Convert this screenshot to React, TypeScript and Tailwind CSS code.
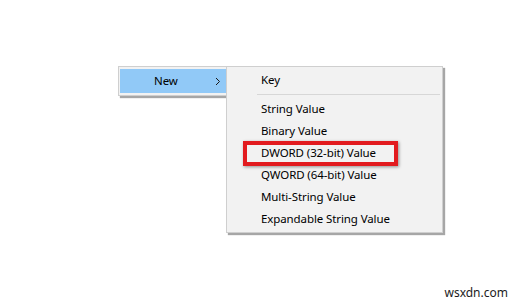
import React from 'react';

const items = [
  'String Value',
  'Binary Value',
  'DWORD (32-bit) Value',
  'QWORD (64-bit) Value',
  'Multi-String Value',
  'Expandable String Value',
];

const App = () => {
  return (
    <div
      className="w-[519px] h-[304px] bg-white flex flex-col text-[11.5px] tracking-[-0.1px] text-black"
      style={{ fontFamily: '"Noto Sans", "Open Sans", sans-serif' }}
    >
      {/* menus */}
      <div className="flex items-start pt-[66px] pl-[118px]">
        {/* parent menu */}
        <div className="w-[109px] bg-[#f2f2f2] border border-[#cfcfcf] py-[2px] pl-[1px] shadow-[2px_2px_1px_rgba(0,0,0,0.35)]">
          <div className="h-[24px] bg-[#91c9f7] flex items-center pl-[34px] pr-[5px]">
            <span className="flex-1">New</span>
            <svg width="6" height="9" viewBox="0 0 6 9">
              <path d="M1 1l3.5 3.5L1 8" fill="none" stroke="#1a1a1a" strokeWidth="1" />
            </svg>
          </div>
        </div>

        {/* sub menu */}
        <div className="-ml-[1px] w-[217px] bg-[#f2f2f2] border border-[#cfcfcf] py-[2px] shadow-[2px_2px_1px_rgba(0,0,0,0.35)]">
          <div className="h-[22px] flex items-center pl-[34px]">Key</div>
          <div className="h-[7px] flex items-center pl-[30px] pr-[2px]">
            <div className="h-px w-full bg-[#d7d7d7]" />
          </div>
          {items.map((label) => (
            <div key={label} className="h-[22px] flex items-center pl-[16px]">
              {label === 'DWORD (32-bit) Value' ? (
                <div className="h-[25px] w-[155px] border-[4px] border-[#e21b1f] flex items-center pl-[14px] shadow-[1px_1px_3px_rgba(0,0,0,0.4)]">
                  {label}
                </div>
              ) : (
                <span className="pl-[18px]">{label}</span>
              )}
            </div>
          ))}
        </div>
      </div>

      {/* watermark */}
      <div className="mt-auto flex justify-end pr-[11px] pb-[2px]">
        <span className="text-[12px] tracking-normal text-[#1c1c1c]">wsxdn.com</span>
      </div>
    </div>
  );
};

export default App;
